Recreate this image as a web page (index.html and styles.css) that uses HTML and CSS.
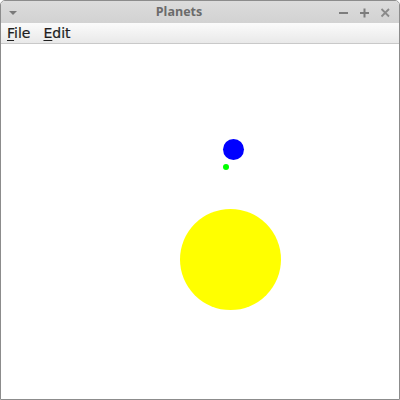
FILE: index.html
```html
<!DOCTYPE html>
<html>
<head>
<meta charset="utf-8">
<link rel="stylesheet" href="styles.css">
</head>
<body>
<div class="window">
  <div class="titlebar">
    <svg class="menu-arrow" width="10" height="6" viewBox="0 0 10 6"><path d="M1 1 L9 1 L5 5 Z" fill="#7a7a7a"/></svg>
    <div class="title">Planets</div>
    <div class="controls">
      <svg width="10" height="10" viewBox="0 0 10 10"><rect x="1" y="4" width="9" height="2" fill="#7d7d7d"/></svg>
      <svg width="10" height="10" viewBox="0 0 10 10"><rect x="1" y="4" width="9" height="2" fill="#7d7d7d"/><rect x="4.5" y="0.5" width="2" height="9" fill="#7d7d7d"/></svg>
      <svg width="10" height="10" viewBox="0 0 10 10"><path d="M1.5 1 L9 8.5 M9 1 L1.5 8.5" stroke="#8a8a8a" stroke-width="1.8"/></svg>
    </div>
  </div>
  <div class="menubar">
    <span class="menu-item"><u>F</u>ile</span>
    <span class="menu-item"><u>E</u>dit</span>
  </div>
  <div class="canvas">
    <div class="body sun"></div>
    <div class="body planet"></div>
    <div class="body moon"></div>
  </div>
</div>
</body>
</html>
```

FILE: styles.css
```css
html, body {
  margin: 0;
  padding: 0;
  background: #ffffff;
}
.window {
  width: 400px;
  height: 400px;
  box-sizing: border-box;
  border: 1px solid #8c8c8c;
  border-radius: 5px 5px 0 0;
  display: flex;
  flex-direction: column;
  overflow: hidden;
}
.titlebar {
  height: 22px;
  flex: none;
  background: linear-gradient(#dcdcdc, #d2d2d2);
  display: flex;
  align-items: center;
  padding: 0 9px 0 7px;
  font-family: "Open Sans", "DejaVu Sans", sans-serif;
}
.menu-arrow {
  flex: none;
  margin-top: 1px;
}
.title {
  flex: 1;
  text-align: center;
  font-size: 12.5px;
  font-weight: bold;
  color: #6b6b6b;
  padding-left: 2px;
  margin-top: -1px;
}
.controls {
  display: flex;
  gap: 11px;
  align-items: center;
  margin-top: 2px;
}
.menubar {
  height: 20px;
  flex: none;
  background: linear-gradient(#fbfbfb, #e9e9e9);
  border-bottom: 1px solid #c9c9c9;
  display: flex;
  align-items: center;
  padding-left: 6px;
  gap: 13px;
  font-family: "DejaVu Sans", sans-serif;
  font-size: 14px;
  color: #1e1e1e;
}
.menu-item {
  -webkit-text-stroke: 0.2px #1e1e1e;
}
.menu-item u {
  text-decoration-thickness: 1px;
  text-underline-offset: 2px;
}
.canvas {
  flex: 1;
  position: relative;
  background: #ffffff;
}
.body {
  position: absolute;
  border-radius: 50%;
}
.sun {
  left: 179px;
  top: 165px;
  width: 101px;
  height: 101px;
  background: #ffff00;
}
.planet {
  left: 222px;
  top: 95px;
  width: 21px;
  height: 21px;
  background: #0000ff;
}
.moon {
  left: 222px;
  top: 120px;
  width: 6px;
  height: 6px;
  background: #00ff00;
}
```
